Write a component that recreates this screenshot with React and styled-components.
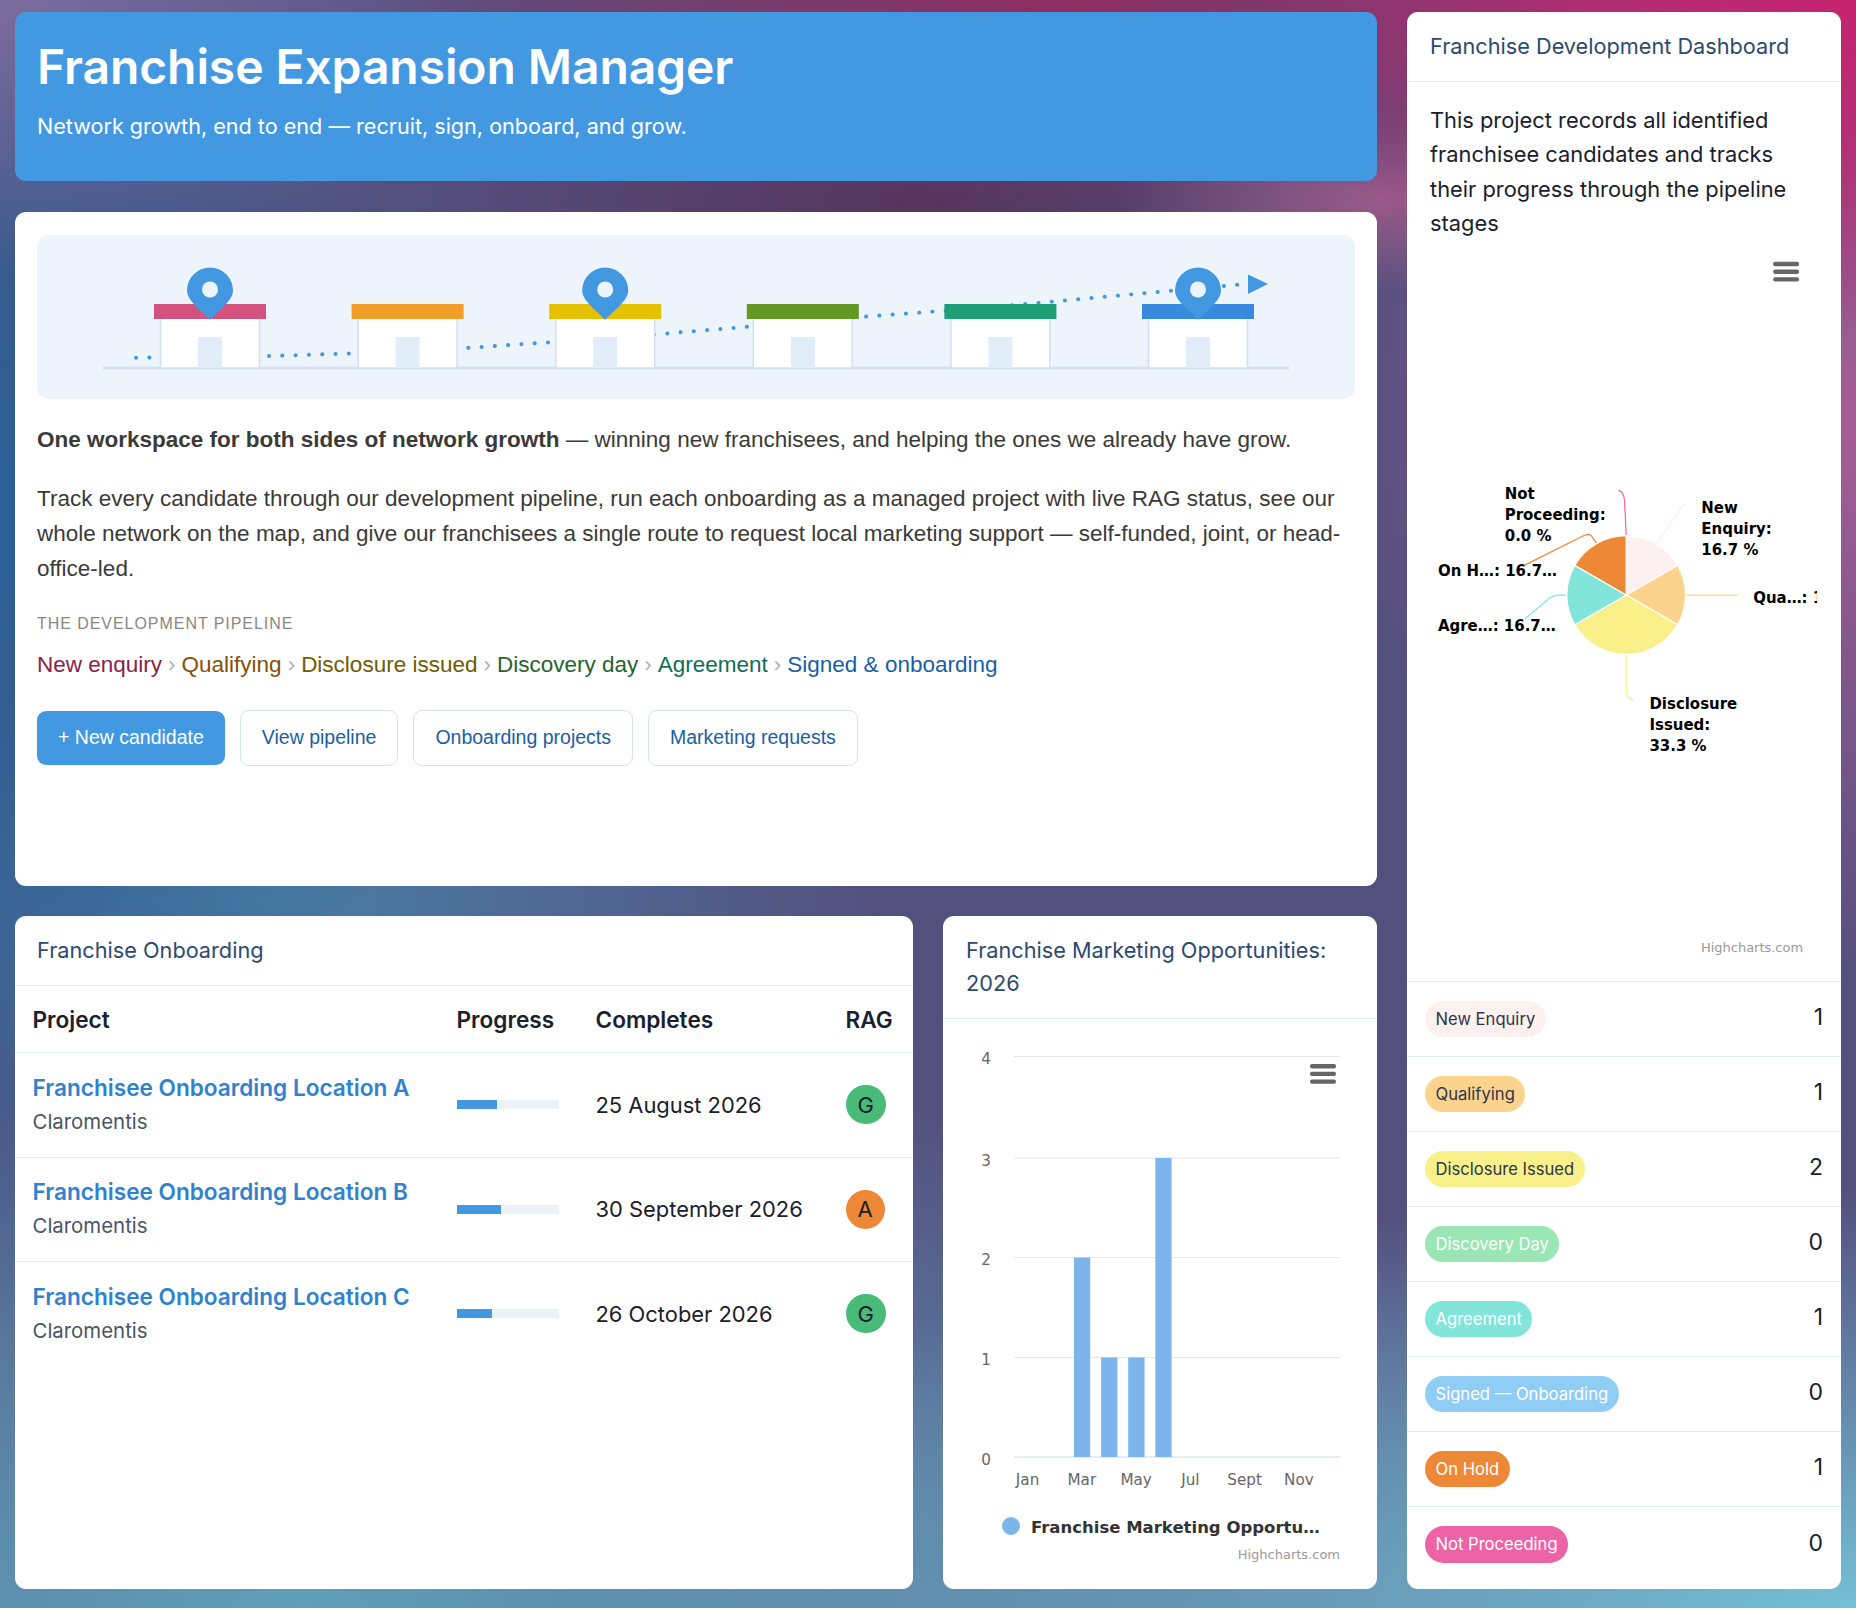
import React from 'react';
import styled, { createGlobalStyle } from 'styled-components';

const GlobalStyle = createGlobalStyle`
  html, body {
    margin: 0;
    padding: 0;
  }

  body {
    min-height: 1608px;
    font-family: Inter, "Liberation Sans", sans-serif;
    background:
      radial-gradient(ellipse 620px 330px at 100% 0%, #c6246f 0%, rgba(198, 36, 111, 0.75) 45%, rgba(198, 36, 111, 0) 100%),
      radial-gradient(ellipse 520px 560px at 100% 420px, #a65c96 0%, rgba(166, 92, 150, 0) 100%),
      radial-gradient(ellipse 700px 200px at 1060px 0%, #8f2d60 0%, rgba(143, 45, 96, 0) 100%),
      radial-gradient(ellipse 260px 90px at 1380px 200px, #9a5a88 0%, rgba(154, 90, 136, 0) 100%),
      radial-gradient(ellipse 520px 140px at 920px 200px, #56345c 0%, rgba(86, 52, 92, 0) 100%),
      radial-gradient(ellipse 520px 280px at 0% 0%, #7c6c9c 0%, rgba(124, 108, 156, 0) 100%),
      radial-gradient(ellipse 420px 820px at 0% 520px, #2a5f95 0%, rgba(42, 95, 149, 0) 100%),
      radial-gradient(ellipse 620px 260px at 260px 900px, #4a7fa6 0%, rgba(74, 127, 166, 0) 100%),
      radial-gradient(ellipse 1300px 420px at 1856px 1608px, #74c0d6 0%, rgba(116, 192, 214, 0) 100%),
      radial-gradient(ellipse 1400px 560px at 300px 1608px, #5f9fba 0%, rgba(95, 159, 186, 0) 100%),
      #54507e;
  }
`;

const Page = styled.div`
  box-sizing: border-box;
  display: grid;
  grid-template-columns: repeat(12, 1fr);
  grid-template-rows: 169px 674px 673px;
  gap: 30px;
  row-gap: 30.5px;
  padding: 12px 15px 19px 15px;
  height: 1608px;
`;

const Card = styled.section`
  background: #fff;
  border-radius: 11px;
  overflow: hidden;
  grid-column: span ${(p) => p.$span};
`;

const Banner = styled(Card)`
  background: #4299e1;
  color: #fff;
  padding: 26px 22px 25px;
  box-sizing: border-box;

  h1 {
    margin: 0;
    font-size: 48px;
    line-height: 58px;
    font-weight: 600;
    letter-spacing: -0.1px;
  }

  p {
    margin: 15px 0 0;
    font-size: 21.6px;
    line-height: 30px;
  }
`;

const Sidebar = styled(Card)`
  grid-column: 10 / span 3;
  grid-row: 1 / span 3;
  display: flex;
  flex-direction: column;
`;

const Intro = styled(Card)`
  padding: 23px 22px;
  box-sizing: border-box;
  font-family: "Liberation Sans", Arial, sans-serif;
  color: #3a3a38;
`;

const HeroBox = styled.div`
  background: #edf4fc;
  border-radius: 12px;
  height: 164px;
  overflow: hidden;

  svg {
    display: block;
    width: 100%;
  }
`;

const Lead = styled.p`
  margin: 23px 0 0;
  font-size: 22.5px;
  line-height: 35px;

  strong {
    font-weight: 700;
  }
`;

const Body = styled.p`
  margin: 24px 0 0;
  font-size: 22.5px;
  line-height: 35.4px;
`;

const Eyebrow = styled.div`
  margin-top: 26px;
  font-size: 16px;
  line-height: 22px;
  letter-spacing: 0.95px;
  color: #888780;
`;

const Stages = styled.div`
  display: flex;
  align-items: center;
  gap: 6px;
  margin-top: 14px;
  font-size: 22.5px;
  line-height: 32px;
`;

const Stage = styled.span`
  color: ${(p) => p.$color};
`;

const Chevron = styled.span`
  color: #b4b2a9;
`;

const Actions = styled.div`
  display: flex;
  align-items: center;
  gap: 15px;
  margin-top: 29px;
`;

const ActionButton = styled.button`
  box-sizing: border-box;
  height: ${(p) => (p.$primary ? 54 : 56)}px;
  padding: 0 21px;
  border-radius: 9px;
  border: ${(p) => (p.$primary ? '0' : '1.5px solid #d3e1f1')};
  background: ${(p) => (p.$primary ? '#4299e1' : '#fff')};
  color: ${(p) => (p.$primary ? '#fff' : '#185fa5')};
  font-family: inherit;
  font-size: 19.5px;
`;

const CardTitle = styled.h2`
  margin: 0;
  padding: 18px 22px 18px ${(p) => (p.$narrow ? 23 : 22)}px;
  font-size: 21.7px;
  line-height: 33px;
  font-weight: 400;
  color: #2c4a6e;
  border-bottom: 1px solid #e2e8f0;
`;

const Description = styled.p`
  margin: 0;
  padding: 21px 22px 15px 23px;
  font-size: 21.85px;
  line-height: 34.3px;
  color: #1a202c;
`;

const Table = styled.table`
  width: 100%;
  border-collapse: collapse;
  table-layout: fixed;
  color: #1a202c;

  th {
    text-align: left;
    font-size: 22.6px;
    font-weight: 600;
    height: 66px;
    padding: 0 0 0 17.5px;
    border-bottom: 1px solid #e2e8f0;
  }

  td {
    height: 103.5px;
    padding: 0 0 0 17.5px;
    font-size: 21.9px;
    border-bottom: 1px solid #e2e8f0;
  }

  tr:last-child td {
    border-bottom: 0;
  }
`;

const ProjectLink = styled.a`
  display: block;
  color: #3182ce;
  font-weight: 600;
  font-size: 22.6px;
  line-height: 34px;
`;

const Owner = styled.div`
  color: #4a5568;
  font-size: 20.4px;
  line-height: 34px;
`;

const Track = styled.div`
  width: 102px;
  height: 9px;
  background: #edf2f7;
`;

const Fill = styled.div`
  height: 100%;
  background: #4299e1;
`;

const Rag = styled.span`
  display: inline-flex;
  align-items: center;
  justify-content: center;
  box-sizing: border-box;
  height: 39px;
  padding: 0 12px;
  border-radius: 999px;
  font-size: 22px;
  background: ${(p) => p.$color};
`;

const StageList = styled.div`
  border-top: 1px solid #e2e8f0;
`;

const StageRow = styled.div`
  box-sizing: border-box;
  display: flex;
  align-items: center;
  justify-content: space-between;
  height: 75px;
  padding: 0 18px;
  border-bottom: 1px solid #e2e8f0;
  color: #1a202c;
  font-size: 23px;

  &:last-child {
    border-bottom: 0;
  }
`;

const StageCount = styled.span`
  padding-bottom: 4px;
`;

const Pill = styled.span`
  display: inline-block;
  padding: 0 10.5px;
  height: 36.5px;
  line-height: 36.5px;
  border-radius: 999px;
  font-size: 16.6px;
  background: ${(p) => p.$bg};
  color: ${(p) => (p.$light ? '#fff' : '#2d3748')};
`;

const ChartSvg = styled.svg`
  display: block;
  flex: none;
`;

const ChartText = styled.text`
  font-family: "DejaVu Sans", Verdana, sans-serif;
  font-size: ${(p) => p.$size || 15.2}px;
  font-weight: ${(p) => (p.$bold ? 700 : 400)};
  fill: ${(p) => p.$fill || '#000'};
`;

const shops = [
  { roof: '#d4537e', pin: true },
  { roof: '#f09e28' },
  { roof: '#e5c100', pin: true },
  { roof: '#639922' },
  { roof: '#1d9e75' },
  { roof: '#378add', pin: true },
];

const stages = [
  ['New enquiry', '#8a2149'],
  ['Qualifying', '#854f0b'],
  ['Disclosure issued', '#6f5c00'],
  ['Discovery day', '#27632f'],
  ['Agreement', '#0f6e56'],
  ['Signed & onboarding', '#185fa5'],
];

const projects = [
  { name: 'Franchisee Onboarding Location A', progress: 40, date: '25 August 2026', rag: 'G', color: '#48bb78' },
  { name: 'Franchisee Onboarding Location B', progress: 44, date: '30 September 2026', rag: 'A', color: '#ed8936' },
  { name: 'Franchisee Onboarding Location C', progress: 35, date: '26 October 2026', rag: 'G', color: '#48bb78' },
];

const pipeline = [
  { label: 'New Enquiry', count: 1, bg: '#fdf0f0' },
  { label: 'Qualifying', count: 1, bg: '#fbd38d' },
  { label: 'Disclosure Issued', count: 2, bg: '#faf089' },
  { label: 'Discovery Day', count: 0, bg: '#9ae6b4', light: true },
  { label: 'Agreement', count: 1, bg: '#81e6d9', light: true },
  { label: 'Signed — Onboarding', count: 0, bg: '#90cdf4', light: true },
  { label: 'On Hold', count: 1, bg: '#ed8936', light: true },
  { label: 'Not Proceeding', count: 0, bg: '#ed64a6', light: true },
];

const months = ['Jan', 'Feb', 'Mar', 'Apr', 'May', 'Jun', 'Jul', 'Aug', 'Sept', 'Oct', 'Nov', 'Dec'];
const monthValues = [0, 0, 2, 1, 1, 3, 0, 0, 0, 0, 0, 0];
// y of each gridline, the rendered chart is not evenly snapped
const gridY = [1458, 1358.5, 1258.5, 1159, 1057.5];

const Pin = ({ x }) => (
  <g>
    <path
      d={`M${x} 320 C${x - 8} 311 ${x - 23} 301 ${x - 23} 290.5 A23 23 0 0 1 ${x + 23} 290.5 C${x + 23} 301 ${x + 8} 311 ${x} 320 Z`}
      fill="#4299e1"
    />
    <circle cx={x} cy="289.5" r="8" fill="#edf4fc" />
  </g>
);

const Hero = () => (
  <HeroBox>
    <svg height="164" viewBox="37 235 1318 164">
      <rect x="103" y="366.5" width="1186" height="3" fill="#d3e3f4" />
      <path
        d="M136 357.7 L268 356 L350 353.5 L465 348 L547 342.5 L660 334 L745 327 L860 317 L941 311 L1015 305 L1180 290 L1246 284"
        fill="none"
        stroke="#4299e1"
        strokeWidth="4"
        strokeLinecap="round"
        strokeDasharray="0.1 13.2"
      />
      <path d="M1248 274.5 L1268 284 L1248 294 Z" fill="#4299e1" />
      {shops.map((shop, i) => {
        const x = 210 + i * 197.6;
        return (
          <g key={shop.roof}>
            <rect x={x - 49.5} y="318" width="99" height="50" fill="#fff" stroke="#cfe0f2" strokeWidth="1.5" />
            <rect x={x - 12} y="337" width="24" height="31" fill="#e1eefa" />
            <rect x={x - 56} y="304" width="112" height="15" fill={shop.roof} />
          </g>
        );
      })}
      {shops.map((shop, i) => (shop.pin ? <Pin key={shop.roof} x={210 + i * 197.6} /> : null))}
    </svg>
  </HeroBox>
);

const MenuIcon = ({ x, y }) => (
  <g fill="#666">
    <rect x={x} y={y} width="26" height="4.4" rx="2" />
    <rect x={x} y={y + 7.7} width="26" height="4.4" rx="2" />
    <rect x={x} y={y + 15.4} width="26" height="4.4" rx="2" />
  </g>
);

const slices = [
  { from: 0, to: 60, color: '#fdf0f0' },
  { from: 60, to: 120, color: '#fbd38d' },
  { from: 120, to: 240, color: '#faf089' },
  { from: 240, to: 300, color: '#81e6d9' },
  { from: 300, to: 360, color: '#ed8936' },
];

const slicePath = (from, to) => {
  const cx = 1626.7;
  const cy = 595;
  const r = 59.5;
  const point = (deg) => {
    const rad = (deg * Math.PI) / 180;
    return `${cx + r * Math.sin(rad)} ${cy - r * Math.cos(rad)}`;
  };
  return `M${cx} ${cy} L${point(from)} A${r} ${r} 0 ${to - from > 180 ? 1 : 0} 1 ${point(to)} Z`;
};

const PieLabel = ({ x, y, lines }) => (
  <ChartText $bold $size={15} x={x} y={y}>
    {lines.map((line, i) => (
      <tspan key={line} x={x} dy={i === 0 ? 0 : 21}>{line}</tspan>
    ))}
  </ChartText>
);

const PieChart = () => (
  <ChartSvg width="100%" height="726" viewBox="1407 255 435 726">
    <defs>
      <clipPath id="pie-clip">
        <rect x="1407" y="255" width="411" height="726" />
      </clipPath>
    </defs>
    <MenuIcon x={1774} y={261} />
    <g fill="none" strokeWidth="1.2">
      <path d="M1657 544 L1680 510 Q1683 504 1686 504" stroke="#fdf0f0" />
      <path d="M1687 595 L1739 595" stroke="#fbd38d" />
      <path d="M1626.7 655 L1626.7 690 Q1627 700 1634 700" stroke="#faf089" />
      <path d="M1566 595 L1558 595 Q1554 595 1550 598 L1525 619" stroke="#81e6d9" />
      <path d="M1597 543 L1592 536 Q1590 533 1585 535 L1525 565" stroke="#ed8936" />
      <path d="M1626.7 535 L1625 500 Q1624 491 1619 490" stroke="#ed64a6" />
    </g>
    {slices.map((s) => (
      <path key={s.color} d={slicePath(s.from, s.to)} fill={s.color} stroke="#fff" strokeWidth="1.2" />
    ))}
    <PieLabel x={1505} y={499} lines={['Not', 'Proceeding:', '0.0 %']} />
    <PieLabel x={1702} y={513} lines={['New', 'Enquiry:', '16.7 %']} />
    <PieLabel x={1438} y={576} lines={['On H…: 16.7…']} />
    <PieLabel x={1438} y={631} lines={['Agre…: 16.7…']} />
    <g clipPath="url(#pie-clip)">
      <PieLabel x={1754} y={603} lines={['Qua…: 16.7 %']} />
    </g>
    <PieLabel x={1650} y={709} lines={['Disclosure', 'Issued:', '33.3 %']} />
    <ChartText x={1804} y={953} textAnchor="end" $size={13} $fill="#999">Highcharts.com</ChartText>
  </ChartSvg>
);

const BarChart = () => {
  const zero = gridY[0];
  const step = 27.13;
  return (
    <ChartSvg width="100%" height="569" viewBox="943 1020 434 569">
      {gridY.map((y, v) => (
        <g key={y}>
          <line x1="1014" x2="1340" y1={y} y2={y} stroke={v === 0 ? '#ccd6eb' : '#e6e6e6'} />
          <ChartText x={991} y={y + 7.5} textAnchor="end" $fill="#666">{v}</ChartText>
        </g>
      ))}
      {monthValues.map((v, i) => (
        v > 0 ? (
          <rect key={months[i]} x={1019.7 + i * step} y={gridY[v]} width="16.3" height={zero - gridY[v]} fill="#7cb5ec" />
        ) : null
      ))}
      {months.map((m, i) => (
        i % 2 === 0 ? (
          <ChartText key={m} x={1014 + (i + 0.5) * step} y={1486} textAnchor="middle" $fill="#666">{m}</ChartText>
        ) : null
      ))}
      <MenuIcon x={1310} y={1065} />
      <circle cx="1011" cy="1527" r="9" fill="#7cb5ec" />
      <ChartText $bold $size={16.5} x={1031} y={1534} $fill="#333">Franchise Marketing Opportu…</ChartText>
      <ChartText x={1340} y={1560} textAnchor="end" $size={13} $fill="#999">Highcharts.com</ChartText>
    </ChartSvg>
  );
};

const App = () => (
  <>
    <GlobalStyle />
    <Page>
      <Banner $span={9}>
        <h1>Franchise Expansion Manager</h1>
        <p>Network growth, end to end — recruit, sign, onboard, and grow.</p>
      </Banner>

      <Sidebar>
        <CardTitle $narrow>Franchise Development Dashboard</CardTitle>
        <Description>
          This project records all identified franchisee candidates and tracks their progress through the pipeline stages
        </Description>
        <PieChart />
        <StageList>
          {pipeline.map((row) => (
            <StageRow key={row.label}>
              <Pill $bg={row.bg} $light={row.light}>{row.label}</Pill>
              <StageCount>{row.count}</StageCount>
            </StageRow>
          ))}
        </StageList>
      </Sidebar>

      <Intro $span={9}>
        <Hero />
        <Lead>
          <strong>One workspace for both sides of network growth</strong> — winning new franchisees, and helping the ones we already have grow.
        </Lead>
        <Body>
          Track every candidate through our development pipeline, run each onboarding as a managed project with live RAG status, see our whole network on the map, and give our franchisees a single route to request local marketing support — self-funded, joint, or head-office-led.
        </Body>
        <Eyebrow>THE DEVELOPMENT PIPELINE</Eyebrow>
        <Stages>
          {stages.map(([label, color], i) => (
            <React.Fragment key={label}>
              {i > 0 && <Chevron>›</Chevron>}
              <Stage $color={color}>{label}</Stage>
            </React.Fragment>
          ))}
        </Stages>
        <Actions>
          <ActionButton $primary>+ New candidate</ActionButton>
          <ActionButton>View pipeline</ActionButton>
          <ActionButton>Onboarding projects</ActionButton>
          <ActionButton>Marketing requests</ActionButton>
        </Actions>
      </Intro>

      <Card $span={6}>
        <CardTitle>Franchise Onboarding</CardTitle>
        <Table>
          <colgroup>
            <col style={{ width: 424 }} />
            <col style={{ width: 139 }} />
            <col style={{ width: 250 }} />
            <col />
          </colgroup>
          <thead>
            <tr>
              <th>Project</th>
              <th>Progress</th>
              <th>Completes</th>
              <th>RAG</th>
            </tr>
          </thead>
          <tbody>
            {projects.map((p) => (
              <tr key={p.name}>
                <td>
                  <ProjectLink>{p.name}</ProjectLink>
                  <Owner>Claromentis</Owner>
                </td>
                <td>
                  <Track>
                    <Fill style={{ width: `${p.progress}%` }} />
                  </Track>
                </td>
                <td>{p.date}</td>
                <td><Rag $color={p.color}>{p.rag}</Rag></td>
              </tr>
            ))}
          </tbody>
        </Table>
      </Card>

      <Card $span={3}>
        <CardTitle $narrow>Franchise Marketing Opportunities: 2026</CardTitle>
        <BarChart />
      </Card>
    </Page>
  </>
);

export default App;
